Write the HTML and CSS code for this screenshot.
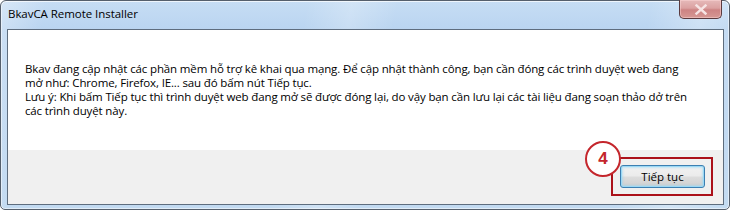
FILE: index.html
```html
<!DOCTYPE html>
<html lang="vi">
<head>
<meta charset="utf-8">
<title>BkavCA Remote Installer</title>
<link rel="stylesheet" href="styles.css">
</head>
<body>
<div class="window">
  <div class="titlebar">
    <span class="title">BkavCA Remote Installer</span>
    <div class="close" aria-label="Close">
      <svg width="14" height="11" viewBox="0 0 14 11"><path d="M2.5 1.5 L11.5 9.5 M11.5 1.5 L2.5 9.5" stroke="#f6e4e4" stroke-width="2.4" stroke-linecap="square"/></svg>
    </div>
  </div>
  <div class="client">
    <div class="content">
      <p class="message">Bkav đang cập nhật các phần mềm hỗ trợ kê khai qua mạng. Để cập nhật thành công, bạn cần đóng các trình duyệt web đang<br>mở như: Chrome, Firefox, IE... sau đó bấm nút Tiếp tục.<br>Lưu ý: Khi bấm Tiếp tục thì trình duyệt web đang mở sẽ được đóng lại, do vậy bạn cần lưu lại các tài liệu đang soạn thảo dở trên<br>các trình duyệt này.</p>
    </div>
    <div class="footer">
      <div class="btn-wrap">
        <button class="btn">Tiếp tục</button>
        <div class="highlight"></div>
        <div class="step">4</div>
      </div>
    </div>
  </div>
</div>
</body>
</html>
```

FILE: styles.css
```css
html, body {
  margin: 0;
  padding: 0;
  background: #ffffff;
}
body {
  font-family: "Open Sans", "Noto Sans", "Liberation Sans", sans-serif;
  font-size: 12px;
}
.window {
  width: 730px;
  height: 210px;
  box-sizing: border-box;
  border: 1px solid #555f6c;
  border-radius: 6px 6px 5px 5px;
  background:
    linear-gradient(100deg, rgba(255,255,255,0.3) 0%, rgba(255,255,255,0) 6%, rgba(255,255,255,0) 40%, rgba(255,255,255,0.22) 46%, rgba(255,255,255,0) 52%, rgba(255,255,255,0) 85%, rgba(255,255,255,0.28) 92%, rgba(255,255,255,0) 100%),
    linear-gradient(#c6ddf4, #b9d4f0 30px, #c2daf1 100%);
  box-shadow: inset 0 1px 0 rgba(255,255,255,0.7), inset 1px 0 0 rgba(255,255,255,0.5), inset -1px 0 0 rgba(255,255,255,0.5), inset 0 -1px 0 rgba(255,255,255,0.5);
  padding: 0 5px 4px 6px;
  display: flex;
  flex-direction: column;
}
.titlebar {
  height: 28px;
  display: flex;
  align-items: flex-start;
  padding-left: 1px;
}
.title {
  margin-top: 5px;
  line-height: 16px;
  font-size: 11.5px;
  color: #000;
  letter-spacing: -0.05px;
}
.close {
  margin-left: auto;
  margin-right: 2px;
  margin-top: -1px;
  width: 43px;
  height: 19px;
  box-sizing: border-box;
  border: 1px solid #5a3a3e;
  border-top: none;
  border-radius: 0 0 5px 5px;
  background: linear-gradient(#e6baba 0%, #dba1a1 45%, #cd8383 55%, #d69894 100%);
  box-shadow: inset 0 0 0 1px rgba(255,220,220,0.45);
  display: flex;
  align-items: center;
  justify-content: center;
}
.client {
  flex: 1;
  border: 1px solid #5e6d7e;
  display: flex;
  flex-direction: column;
  background: #f0f0f0;
}
.content {
  height: 120px;
  background: #ffffff;
  padding: 32px 0 0 17px;
  box-sizing: border-box;
}
.message {
  margin: 0;
  line-height: 14px;
  font-size: 11.5px;
  color: #000;
  white-space: nowrap;
  letter-spacing: -0.14px;
}
.footer {
  flex: 1;
  display: flex;
  justify-content: flex-end;
  align-items: flex-start;
  padding: 15px 18px 0 0;
}
.btn-wrap {
  position: relative;
}
.btn {
  width: 85px;
  height: 23px;
  box-sizing: border-box;
  border: 1px solid #3c7fb1;
  border-radius: 3px;
  background: linear-gradient(#f2f2f2 0%, #ebebeb 48%, #dddddd 52%, #cfcfcf 100%);
  box-shadow: inset 0 0 0 1px #9ad8f5, inset 0 0 2px 2px rgba(150,215,245,0.5);
  font-family: "Open Sans", "Noto Sans", sans-serif;
  font-size: 11.5px;
  color: #000;
  padding: 0;
  line-height: 20px;
  display: block;
}
.highlight {
  position: absolute;
  left: -9px;
  top: -8px;
  right: -8px;
  bottom: -8px;
  border: 2px solid #ab111a;
}
.step {
  position: absolute;
  left: -35px;
  top: -24px;
  width: 36px;
  height: 36px;
  box-sizing: border-box;
  border: 2px solid #c4262c;
  border-radius: 50%;
  background: #ffffff;
  color: #c4262c;
  font-family: "Liberation Sans", "Open Sans", sans-serif;
  font-weight: bold;
  font-size: 17px;
  line-height: 32px;
  text-align: center;
}
```
